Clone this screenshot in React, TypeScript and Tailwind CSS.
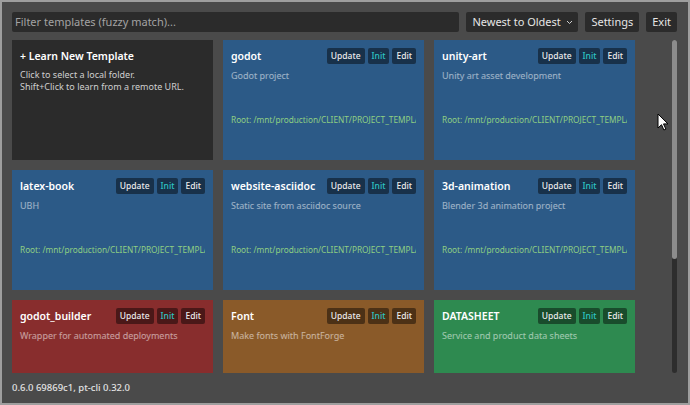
import React from "react";

type Template = {
  name: string;
  desc: string;
  color: string;
  root?: string;
};

const templates: Template[] = [
  { name: "godot", desc: "Godot project", color: "bg-[#2c5a87]", root: "Root: /mnt/production/CLIENT/PROJECT_TEMPLATES/godot" },
  { name: "unity-art", desc: "Unity art asset development", color: "bg-[#2c5a87]", root: "Root: /mnt/production/CLIENT/PROJECT_TEMPLATES/unity-art" },
  { name: "latex-book", desc: "UBH", color: "bg-[#2c5a87]", root: "Root: /mnt/production/CLIENT/PROJECT_TEMPLATES/latex-book" },
  { name: "website-asciidoc", desc: "Static site from asciidoc source", color: "bg-[#2c5a87]", root: "Root: /mnt/production/CLIENT/PROJECT_TEMPLATES/website-asciidoc" },
  { name: "3d-animation", desc: "Blender 3d animation project", color: "bg-[#2c5a87]", root: "Root: /mnt/production/CLIENT/PROJECT_TEMPLATES/3d-animation" },
  { name: "godot_builder", desc: "Wrapper for automated deployments", color: "bg-[#882d2d]", root: "Root: /mnt/production/CLIENT/PROJECT_TEMPLATES/godot_builder" },
  { name: "Font", desc: "Make fonts with FontForge", color: "bg-[#8a5a29]", root: "Root: /mnt/production/CLIENT/PROJECT_TEMPLATES/font" },
  { name: "DATASHEET", desc: "Service and product data sheets", color: "bg-[#2e8a50]", root: "Root: /mnt/production/CLIENT/PROJECT_TEMPLATES/datasheet" },
];

function CardButton({ label, accent }: { label: string; accent?: boolean }) {
  return (
    <button
      className={`h-4 px-[4px] rounded-[2px] bg-black/45 text-[8.5px] leading-4 font-medium ${
        accent ? "text-[#2ec6c6]" : "text-[#ececec]"
      }`}
    >
      {label}
    </button>
  );
}

function TemplateCard({ t }: { t: Template }) {
  return (
    <div className={`h-[120px] ${t.color} p-2 flex flex-col overflow-hidden`}>
      <div className="flex items-start justify-between">
        <span className="text-[10.5px] leading-4 font-semibold text-white">{t.name}</span>
        <div className="flex gap-[3px]">
          <CardButton label="Update" />
          <CardButton label="Init" accent />
          <CardButton label="Edit" />
        </div>
      </div>
      <div className="mt-[6px] text-[9px] leading-3 text-white/55">{t.desc}</div>
      {t.root && (
        <div className="mt-[32px] text-[8.25px] leading-3 text-[#8fcf83] whitespace-nowrap overflow-hidden">
          {t.root}
        </div>
      )}
    </div>
  );
}

export default function App() {
  return (
    <div
      className="relative w-[690px] h-[405px] overflow-hidden bg-[#4a4a4a] border-2 border-[#9e9e9e] px-[10px] pt-[10px] flex flex-col"
      style={{ fontFamily: '"Noto Sans", "Open Sans", sans-serif' }}
    >
      <div className="h-5 flex gap-[7px] pr-[1px]">
        <div className="flex-1 bg-[#2b2b2b] rounded-[2px] px-[3px] text-[11px] leading-5 text-[#a3a3a3]">
          Filter templates (fuzzy match)...
        </div>
        <div className="w-[112px] bg-[#2b2b2b] rounded-[2px] pl-[6px] pr-[5px] flex items-center justify-between text-[11px] text-[#e6e6e6]">
          <span>Newest to Oldest</span>
          <svg width="7" height="5" viewBox="0 0 7 5" fill="none" stroke="#cfcfcf" strokeWidth="1">
            <path d="M1 1l2.5 2.5L6 1" />
          </svg>
        </div>
        <button className="bg-[#2b2b2b] rounded-[2px] px-[6px] text-[11px] text-[#e6e6e6]">Settings</button>
        <button className="bg-[#2b2b2b] rounded-[2px] px-[6px] text-[11px] text-[#e6e6e6]">Exit</button>
      </div>

      <div className="mt-2 h-[333px] flex">
        <div className="w-[623px] h-full overflow-hidden">
          <div className="grid grid-cols-3 gap-[10px]">
            <div className="h-[120px] bg-[#2b2b2b] p-2">
              <div className="text-[10.5px] leading-4 font-semibold text-white">+ Learn New Template</div>
              <div className="mt-[5px] text-[9px] leading-3 text-[#cfcfcf]">
                Click to select a local folder.
                <br />
                Shift+Click to learn from a remote URL.
              </div>
            </div>
            {templates.map((t) => (
              <TemplateCard key={t.name} t={t} />
            ))}
          </div>
        </div>
        <div className="ml-[37px] w-[5px] h-full rounded-full bg-[#2d2d2d] flex flex-col">
          <div className="h-[219px] rounded-full bg-[#8c8c8c]" />
        </div>
      </div>

      <div className="mt-[8px] text-[9.5px] leading-[14px] font-medium text-[#e2e2e2]">0.6.0 69869c1, pt-cli 0.32.0</div>

      <svg
        className="absolute left-[655px] top-[111px]"
        width="12"
        height="18"
        viewBox="0 0 12 18"
      >
        <path d="M1 1v14l3.5-3.3 2.4 5.3 2-.9-2.4-5.2H11z" fill="#fff" stroke="#000" strokeWidth="1" strokeLinejoin="round" />
      </svg>
    </div>
  );
}
